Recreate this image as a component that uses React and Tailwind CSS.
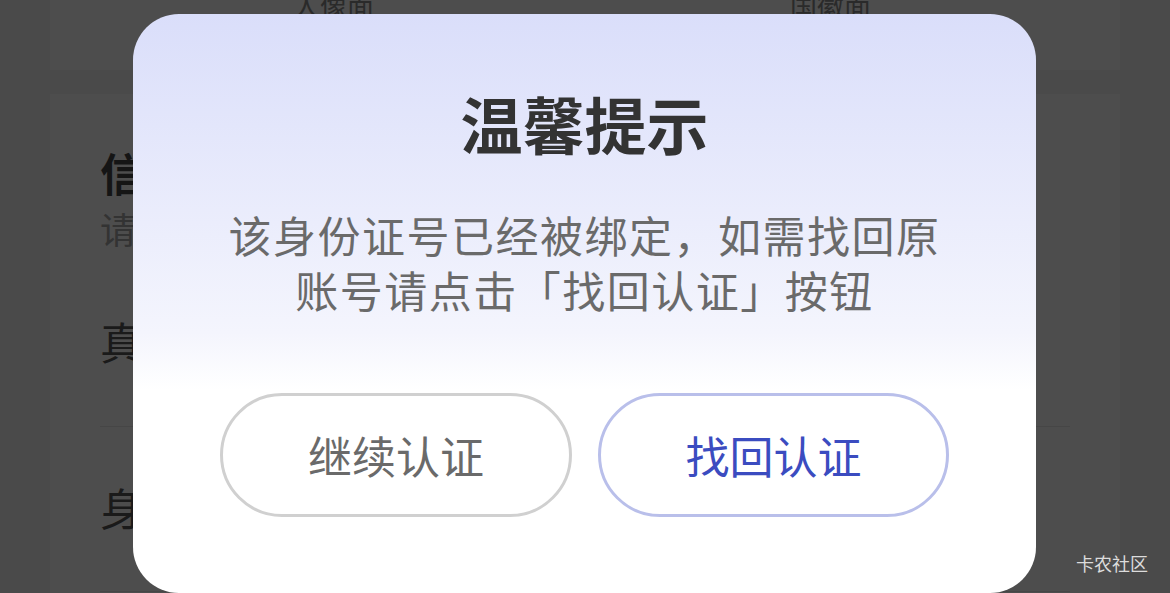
import React from "react";

const font = { fontFamily: '"Noto Sans CJK SC", "Noto Sans", sans-serif' };

const Background = () => (
  <div className="h-[593px] w-[1170px] overflow-hidden bg-[#4a4a4a] px-[50px]" style={font}>
    {/* top card: id photo labels, cut off */}
    <div className="-mt-[14px] flex h-[84px] bg-[#4d4d4d] text-[27px] text-[#2a2a2a]">
      <div className="w-[535px] pl-[243px] leading-[40px]">人像面</div>
      <div className="pl-[205px] leading-[40px]">国徽面</div>
    </div>
    <div className="mt-[24px] h-[600px] bg-[#4d4d4d] px-[50px] pt-[49px]">
      <div className="text-[45px] font-bold leading-[60px] text-[#151515]">信息</div>
      <div className="text-[36px] leading-[50px] text-[#333]">请填写</div>
      <div className="mt-[58px] text-[44px] leading-[60px] text-[#1a1a1a]">真实姓名</div>
      <div className="mt-[55px] h-px w-[970px] bg-[#464646]" />
      <div className="mt-[50px] text-[44px] leading-[60px] text-[#1a1a1a]">身份证号</div>
      <div className="mt-[54px] h-px w-[970px] bg-[#464646]" />
    </div>
  </div>
);

export default function App() {
  return (
    <div className="relative h-[593px] w-[1170px] overflow-hidden">
      <Background />

      <div className="absolute right-[22px] top-[550px] text-[18px] leading-[26px] text-[#dcdcdc]" style={font}>
        卡农社区
      </div>

      {/* dialog */}
      <div
        className="absolute left-[133px] top-[14px] flex h-[579px] w-[903px] flex-col items-center rounded-[46px] bg-gradient-to-b from-[#dadefa] via-[#f4f5fd] via-55% to-white to-65% pt-[72px]"
        style={font}
      >
        <div className="text-[62px] font-bold leading-[74px] text-[#333333]">温馨提示</div>
        <p className="mt-[47px] text-center text-[43px] leading-[55px] tracking-[1.5px] text-[#6a6a6a]">
          该身份证号已经被绑定，如需找回原
          <br />
          账号请点击「找回认证」按钮
        </p>
        <div className="mt-[76px] flex gap-[26px]">
          <button className="flex h-[124px] w-[352px] items-center justify-center rounded-full border-[3px] border-[#d0d0d0] bg-white text-[44px] text-[#6a6a6a]">
            继续认证
          </button>
          <button className="flex h-[124px] w-[351px] items-center justify-center rounded-full border-[3px] border-[#b9bfea] bg-white text-[44px] text-[#3b4cc0]">
            找回认证
          </button>
        </div>
      </div>
    </div>
  );
}
